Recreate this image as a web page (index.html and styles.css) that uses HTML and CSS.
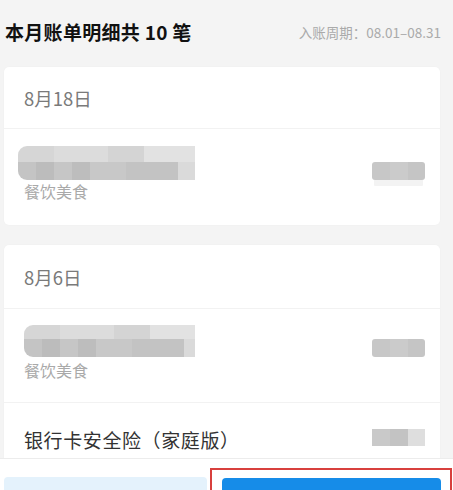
FILE: index.html
```html
<!DOCTYPE html>
<html lang="zh">
<head>
<meta charset="utf-8">
<link rel="stylesheet" href="styles.css">
</head>
<body>
<div class="page">
  <div class="main">
    <div class="head">
      <div class="title">本月账单明细共 10 笔</div>
      <div class="period">入账周期：08.01–08.31</div>
    </div>

    <div class="card card1">
      <div class="date">8月18日</div>
      <div class="row row-a">
        <div class="left">
          <div class="blur blur1"></div>
          <div class="cat">餐饮美食</div>
        </div>
        <div class="amt amt1"></div>
      </div>
    </div>

    <div class="card card2">
      <div class="date">8月6日</div>
      <div class="row row-b">
        <div class="left">
          <div class="blur blur2"></div>
          <div class="cat">餐饮美食</div>
        </div>
        <div class="amt amt2"></div>
      </div>
      <div class="row row-c">
        <div class="name">银行卡安全险（家庭版）</div>
        <div class="amt amt3"></div>
      </div>
    </div>
  </div>

  <div class="footer">
    <div class="btn-light"></div>
    <div class="hl">
      <div class="btn-blue"></div>
    </div>
  </div>
</div>
</body>
</html>
```
FILE: styles.css
```css
* { box-sizing: border-box; }
html, body { margin: 0; padding: 0; }
body {
  background: #f4f4f4;
  font-family: "Noto Sans CJK SC", "Noto Sans", sans-serif;
  width: 453px;
  height: 490px;
  overflow: hidden;
}
.page {
  display: flex;
  flex-direction: column;
  height: 490px;
}
.main {
  flex: 1;
  overflow: hidden;
  padding: 0 13px 0 4px;
}
.head {
  height: 67px;
  display: flex;
  align-items: center;
  justify-content: space-between;
  padding: 0 0 4px 1px;
  margin-right: -1px;
}
.title {
  font-size: 19px;
  font-weight: 700;
  color: #111;
  letter-spacing: 0.3px;
}
.period {
  font-size: 13.5px;
  color: #aaaaaa;
}
.card {
  background: #fff;
  border-radius: 5px;
  box-shadow: 0 0 2px rgba(0,0,0,0.03);
}
.card1 { height: 158px; margin-bottom: 20px; }
.date {
  height: 62px;
  display: flex;
  align-items: center;
  padding-left: 20px;
  padding-top: 1px;
  font-size: 18.5px;
  color: #7a7a7a;
  border-bottom: 1px solid #f2f2f2;
}
.card2 .date { height: 64px; }
.row {
  display: flex;
  justify-content: space-between;
  padding: 0 15px 0 14px;
}
.row-a { height: 95px; padding-top: 17px; }
.row-b { height: 94px; padding-top: 16px; padding-left: 20px; border-bottom: 1px solid #f2f2f2; }
.row-c { height: 60px; align-items: center; padding-left: 20px; padding-top: 12px; }
.left { display: flex; flex-direction: column; }
.blur {
  width: 177px;
  height: 34px;
  border-radius: 9px 0 0 9px;
  background:
    linear-gradient(90deg, #c4c4c4 0 18px, #bcbcbc 18px 36px, #c6c6c6 36px 54px, #bdbdbd 54px 72px, #c8c8c8 72px 108px, #c3c3c3 108px 160px, #dadada 160px 177px) bottom / 100% 18px no-repeat,
    linear-gradient(90deg, #d6d6d6 0 36px, #dcdcdc 36px 90px, #d4d4d4 90px 126px, #e2e2e2 126px 177px) top / 100% 16px no-repeat;
}
.blur2 { width: 171px; height: 32px; }
.cat {
  font-size: 16px;
  color: #a9a9a9;
  margin-top: 0;
  padding-left: 6px;
  line-height: 22px;
}
.row-b .cat { padding-left: 0; margin-top: 2px; }
.amt {
  width: 53px;
  height: 18px;
  border-radius: 3px;
  background: linear-gradient(90deg, #c7c7c7 0 18px, #cbcbcb 18px 36px, #c5c5c5 36px 53px);
}
.amt1 { margin-top: 16px; box-shadow: 0 8px 0 -2px #f3f3f3; }
.amt2 { margin-top: 14px; }
.amt3 { height: 17px; margin-top: -4px; border-radius: 0; background: linear-gradient(90deg, #c9c9c9 0 18px, #c3c3c3 18px 36px, #dedede 36px 53px); }
.name {
  font-size: 19px;
  color: #333;
  letter-spacing: 0.6px;
}
.footer {
  height: 32px;
  background: #fff;
  border-top: 1px solid #ececec;
  display: flex;
  align-items: flex-end;
  padding-left: 4px;
}
.btn-light {
  width: 203px;
  height: 13px;
  background: #e4f2fc;
  border-radius: 4px 4px 0 0;
}
.hl {
  margin-left: 3px;
  width: 242px;
  height: 22px;
  border: 2px solid #d8403d;
  border-bottom: none;
  padding: 8px 9px 0 10px;
}
.btn-blue {
  height: 100%;
  background: #168ce8;
  border-radius: 4px 4px 0 0;
}
```
